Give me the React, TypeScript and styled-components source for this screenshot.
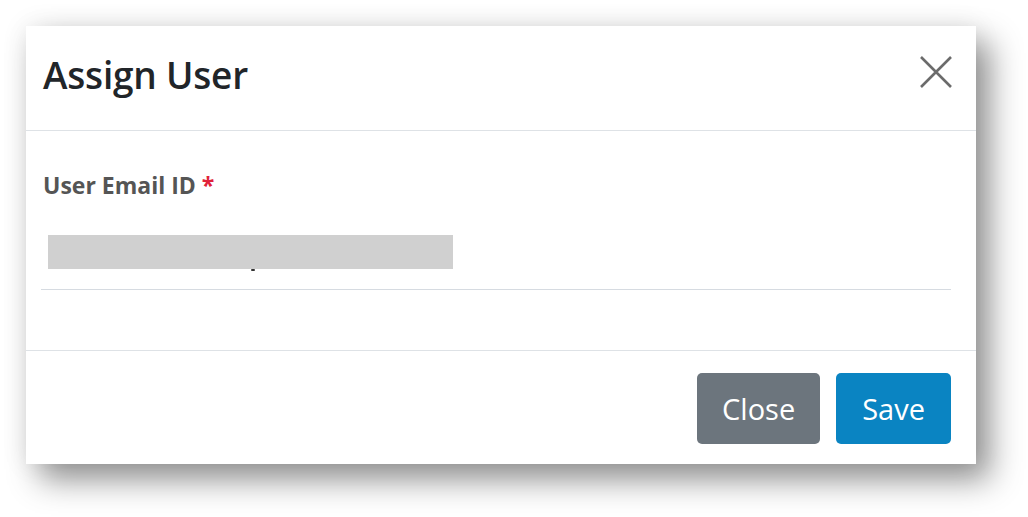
import React from 'react';
import styled, { createGlobalStyle } from 'styled-components';

const GlobalStyle = createGlobalStyle`
    body {
        margin: 0;
        background: #ffffff;
        font-family: 'Open Sans', 'Noto Sans', sans-serif;
    }
`;

const Page = styled.div`
    min-height: 100vh;
    box-sizing: border-box;
    padding: 26px 0 0 26px;
`;

const Dialog = styled.div`
    width: 950px;
    height: 438px;
    background: #ffffff;
    display: flex;
    flex-direction: column;
    box-shadow: 14px 16px 30px rgba(0, 0, 0, 0.42), 0 0 26px rgba(0, 0, 0, 0.08);
`;

const Header = styled.div`
    height: 105px;
    box-sizing: border-box;
    display: flex;
    align-items: center;
    justify-content: space-between;
    padding: 0 23px 12px 17px;
    border-bottom: 1px solid #dee2e6;
`;

const Title = styled.h1`
    margin: 4px 0 0;
    font-size: 37px;
    font-weight: 600;
    color: #212529;
    letter-spacing: -0.2px;
`;

const CloseIcon = styled.button`
    border: none;
    background: none;
    padding: 0;
    width: 34px;
    height: 34px;
    display: flex;
    align-items: center;
    justify-content: center;
    cursor: pointer;
`;

const Body = styled.div`
    flex: 1;
    padding: 38px 25px 0 15px;
    border-bottom: 1px solid #dee2e6;
`;

const Label = styled.label`
    display: block;
    font-size: 23px;
    font-weight: 700;
    color: #555555;
    margin-left: 2px;
`;

const Required = styled.span`
    color: #e0223a;
`;

const Field = styled.div`
    position: relative;
    margin-top: 34px;
    height: 54px;
    border-bottom: 1px solid #d6dbe1;
`;

const Redacted = styled.div`
    position: absolute;
    left: 7px;
    top: 0;
    width: 405px;
    height: 34px;
    background: #d0d0d0;
`;

const Descender = styled.span`
    position: absolute;
    left: 210px;
    top: 34px;
    width: 4px;
    height: 2px;
    background: #333;
    border-radius: 1px;
`;

const Footer = styled.div`
    height: 113px;
    box-sizing: border-box;
    display: flex;
    justify-content: flex-end;
    align-items: flex-start;
    gap: 16px;
    padding: 22px 25px 0 0;
`;

const Button = styled.button<{ $variant: 'secondary' | 'primary' }>`
    height: 71px;
    padding: 0 ${(p) => (p.$variant === 'secondary' ? '25px' : '26px')};
    border: none;
    border-radius: 5px;
    font-family: 'Open Sans', 'Noto Sans', sans-serif;
    font-size: 29px;
    color: #ffffff;
    background: ${(p) => (p.$variant === 'secondary' ? '#6c757d' : '#0a84c2')};
    cursor: pointer;
`;

const App: React.FC = () => {
    return (
        <Page>
            <GlobalStyle />
            <Dialog>
                <Header>
                    <Title>Assign User</Title>
                    <CloseIcon aria-label="close">
                        <svg width="32" height="32" viewBox="0 0 32 32">
                            <path d="M1 1 L31 31 M31 1 L1 31" stroke="#6b6b6b" strokeWidth="2.6" fill="none" />
                        </svg>
                    </CloseIcon>
                </Header>
                <Body>
                    <Label>
                        User Email ID <Required>*</Required>
                    </Label>
                    <Field>
                        <Redacted />
                        <Descender />
                    </Field>
                </Body>
                <Footer>
                    <Button $variant="secondary">Close</Button>
                    <Button $variant="primary">Save</Button>
                </Footer>
            </Dialog>
        </Page>
    );
};

export default App;
